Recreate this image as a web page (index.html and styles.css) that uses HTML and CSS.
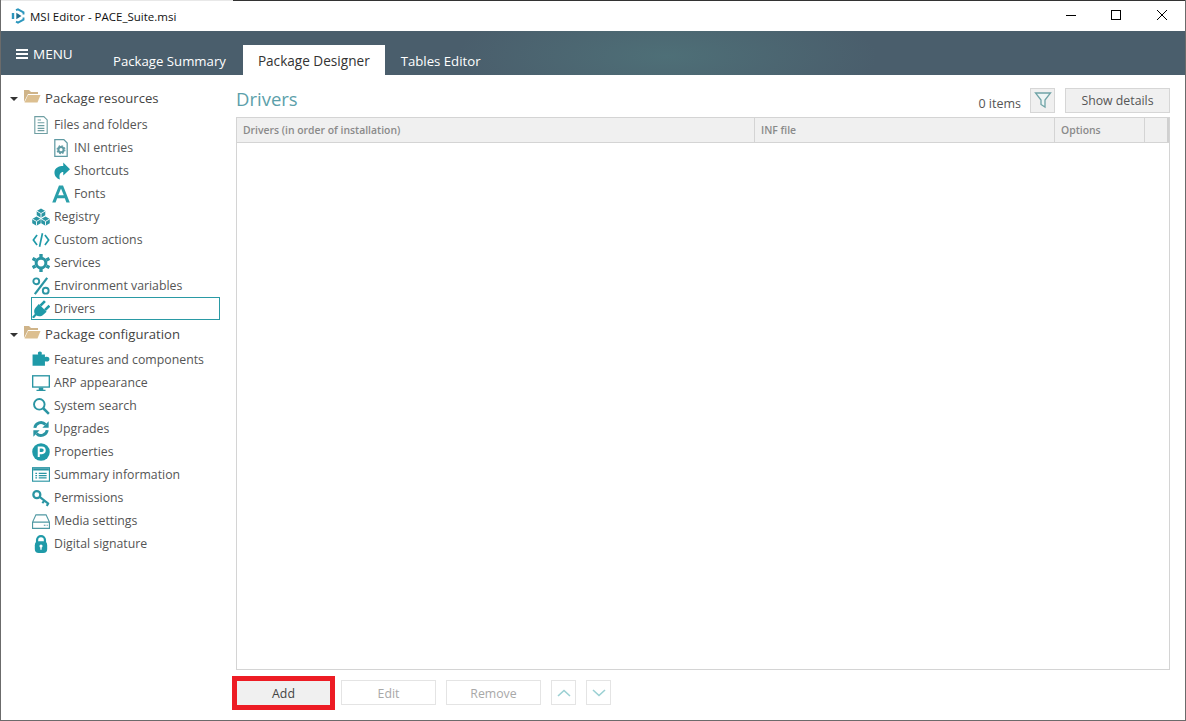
FILE: index.html
```html
<!doctype html>
<html lang="en">
<head>
    <meta charset="UTF-8">
    <title>MSI Editor - PACE_Suite.msi</title>
    <link rel="stylesheet" href="styles.css">
</head>
<body>
    <div class="window">
        <div class="top-edge"></div>
        <div class="titlebar">
            <svg class="app-icon" width="16" height="16" viewBox="0 0 16 16">
                <path d="M6 2.200 8 1.300l5.500 3v2.200M13.500 9.500v2.200L8 14.700l-2-1" fill="none" stroke="#2b96bd" stroke-width="1.900"/>
                <path d="M3 11V5" fill="none" stroke="#2b96bd" stroke-width="2.400"/>
                <path d="M6.300 4.800 11.500 8l-5.200 3.200z" fill="#1f6f8f"/>
            </svg>
            <span class="app-title">MSI Editor - PACE_Suite.msi</span>
            <div class="win-buttons">
                <svg width="12" height="12" viewBox="0 0 12 12"><path d="M1 6.500h10" stroke="#000" fill="none"/></svg>
                <svg width="12" height="12" viewBox="0 0 12 12"><rect x="1.500" y="1.500" width="9" height="9" stroke="#000" fill="none"/></svg>
                <svg width="12" height="12" viewBox="0 0 12 12"><path d="M1 1l10 10M11 1 1 11" stroke="#000" fill="none"/></svg>
            </div>
        </div>

        <div class="menubar">
            <div class="menu-btn">
                <svg width="12" height="10" viewBox="0 0 12 10"><path d="M0 1h12M0 5h12M0 9h12" stroke="#fff" stroke-width="2" fill="none"/></svg>
                MENU
            </div>
            <div class="tabs">
                <div class="tab">Package Summary</div>
                <div class="tab active">Package Designer</div>
                <div class="tab">Tables Editor</div>
            </div>
        </div>

        <div class="main">
            <div class="sidebar">
                <div class="group">
                    <div class="tree-row root">
                        <span class="caret"></span>
                        <svg class="folder" width="18" height="14" viewBox="0 0 18 14"><path d="M1 13V1h5l2 2h7v2H5l-4 8z" fill="#cfb489"/><path d="M1.500 13.500 5 6h12.500l-3 7.500z" fill="#dcbf90"/></svg>
                        <span>Package resources</span>
                    </div>
                    <div class="tree-row">
                        <svg class="icon" viewBox="0 0 16 16"><path d="M2.500.5h8l3 3v12h-11z" fill="#fff" stroke="#6f9fa3"/><path d="M5 3.500h3M5 6h6M5 8.500h6M5 11h6M5 13h6" stroke="#6f9fa3" fill="none"/></svg>
                        <span>Files and folders</span>
                    </div>
                    <div class="tree-row sub">
                        <svg class="icon" viewBox="0 0 16 16"><path d="M2.500.5h8l3 3v12h-11z" fill="#fff" stroke="#5f9aa3" stroke-width="1.100"/><circle cx="8" cy="9.500" r="2.300" fill="none" stroke="#5f9aa3" stroke-width="1.800"/><circle cx="8" cy="9.500" r="3.500" fill="none" stroke="#5f9aa3" stroke-width="1" stroke-dasharray="1.500 1.250"/></svg>
                        <span>INI entries</span>
                    </div>
                    <div class="tree-row sub">
                        <svg class="icon" viewBox="0 0 16 16"><path d="M10 .5l6 6-6 5.500V8.800C7.500 8.800 6 10.500 7 15.500 4 14.500 2 12 2.200 8.800 2.600 5.200 6 3.500 10 3.500z" fill="#1f9aa8"/></svg>
                        <span>Shortcuts</span>
                    </div>
                    <div class="tree-row sub">
                        <svg class="icon" viewBox="0 0 16 16"><path d="M6.200.5h3.600L15.800 15.500h-3l-1.400-3.800H4.600L3.200 15.500h-3zM5.500 9.200h5L8 3z" fill="#2a9faa"/></svg>
                        <span>Fonts</span>
                    </div>
                    <div class="tree-row">
                        <svg class="icon" viewBox="0 0 16 16"><path d="M8 .5l3.800 2.200v3.800L8 8.700 4.200 6.500V2.700z" fill="#2a95a3"/><path d="M4 7.500l3.800 2.200v3.800L4 15.700.2 13.500V9.700z" fill="#2a95a3"/><path d="M12 7.500l3.800 2.200v3.800L12 15.700l-3.800-2.200V9.700z" fill="#2a95a3"/><path d="M4.200 2.700 8 4.900l3.800-2.200M8 4.900v3.800M.2 9.700 4 11.900l3.800-2.200M4 11.900v3.800M8.200 9.700l3.800 2.200 3.800-2.200M12 11.900v3.800" stroke="#fff" stroke-width=".8" fill="none"/></svg>
                        <span>Registry</span>
                    </div>
                    <div class="tree-row">
                        <svg class="icon" viewBox="0 0 16 16"><path d="M4.500 3.500 1.200 8l3.300 4.500M11.500 3.500 14.800 8l-3.300 4.500M9.300 2 6.700 14" stroke="#1f9aa8" stroke-width="1.500" fill="none"/></svg>
                        <span>Custom actions</span>
                    </div>
                    <div class="tree-row">
                        <svg class="icon" viewBox="0 0 16 16"><circle cx="8" cy="8" r="4.300" fill="none" stroke="#2a95a3" stroke-width="2.600"/><path d="M8 0v3M8 13v3M.5 4l2.700 1.400M12.800 10.600l2.700 1.400M15.500 4l-2.700 1.400M3.200 10.600.5 12" stroke="#2a95a3" stroke-width="3" fill="none"/></svg>
                        <span>Services</span>
                    </div>
                    <div class="tree-row">
                        <svg class="icon" viewBox="0 0 16 16"><circle cx="3.800" cy="3.800" r="2.600" fill="none" stroke="#2a95a3" stroke-width="1.700"/><circle cx="12.200" cy="12.200" r="2.600" fill="none" stroke="#2a95a3" stroke-width="1.700"/><path d="M13.500 .8 2.500 15.200" stroke="#2a95a3" stroke-width="2" fill="none"/></svg>
                        <span>Environment variables</span>
                    </div>
                    <div class="tree-row selected">
                        <svg class="icon" viewBox="0 0 16 16"><path d="M0 15 2.500 12.500C1.500 10.500 1.800 8.300 3.500 6.500L6 3.500 13 10.500 10 13C8.300 14.700 6 15 3.800 13.800L1.500 16.500z" fill="#1f9aa8"/><path d="M7.500 5 11.500 1M11.500 9 15.500 5" stroke="#1f9aa8" stroke-width="2.400" fill="none"/></svg>
                        <span>Drivers</span>
                    </div>
                </div>

                <div class="group">
                    <div class="tree-row root">
                        <span class="caret"></span>
                        <svg class="folder" width="18" height="14" viewBox="0 0 18 14"><path d="M1 13V1h5l2 2h7v2H5l-4 8z" fill="#cfb489"/><path d="M1.500 13.500 5 6h12.500l-3 7.500z" fill="#dcbf90"/></svg>
                        <span>Package configuration</span>
                    </div>
                    <div class="tree-row first">
                        <svg class="icon" viewBox="0 0 16 16"><path d="M.5 3H5.500C4.800 1.500 5.500.5 7 .5S9.200 1.500 8.500 3H11.500V5.500C13 4.800 15.500 5 15.500 7.300S13 9.800 11.500 9V13H.5z" fill="#1f9aa8"/></svg>
                        <span>Features and components</span>
                    </div>
                    <div class="tree-row">
                        <svg class="icon" viewBox="0 0 16 16"><rect x=".6" y="1.600" width="14.800" height="10" fill="none" stroke="#2a95a3" stroke-width="1.200"/><path d="M6 12h4v2H6zM4 14h8v1.200H4z" fill="#2a95a3"/></svg>
                        <span>ARP appearance</span>
                    </div>
                    <div class="tree-row">
                        <svg class="icon" viewBox="0 0 16 16"><circle cx="6.500" cy="6.500" r="4.700" fill="none" stroke="#2a95a3" stroke-width="1.700"/><path d="M10 10l5 5" stroke="#2a95a3" stroke-width="2.200" fill="none"/></svg>
                        <span>System search</span>
                    </div>
                    <div class="tree-row">
                        <svg class="icon" viewBox="0 0 16 16"><path d="M2.500 7A5.500 5.500 0 0 1 12 4" fill="none" stroke="#2a95a3" stroke-width="2.600"/><path d="M13.500 9A5.500 5.500 0 0 1 4 12" fill="none" stroke="#2a95a3" stroke-width="2.600"/><path d="M14.800 1.200v5.600H9.200zM1.200 14.800V9.200h5.600z" fill="#2a95a3"/></svg>
                        <span>Upgrades</span>
                    </div>
                    <div class="tree-row">
                        <svg class="icon" viewBox="0 0 16 16"><circle cx="8" cy="8" r="7.800" fill="#1f9aa8"/><path d="M6 12.500V4h2.800a2.500 2.500 0 0 1 0 5H6" fill="none" stroke="#fff" stroke-width="1.800"/></svg>
                        <span>Properties</span>
                    </div>
                    <div class="tree-row">
                        <svg class="icon" viewBox="0 0 16 16"><rect x=".5" y="1.500" width="15" height="12" fill="none" stroke="#2a95a3"/><path d="M1 2h14v2H1z" fill="#2a95a3"/><path d="M3 6.500h1.500M6 6.500h7M3 8.500h1.500M6 8.500h7M3 10.500h1.500M6 10.500h7" stroke="#2a95a3" fill="none"/></svg>
                        <span>Summary information</span>
                    </div>
                    <div class="tree-row">
                        <svg class="icon" viewBox="0 0 16 16"><circle cx="4.300" cy="5" r="3.100" fill="none" stroke="#2a95a3" stroke-width="2"/><path d="M6.800 7l8.200 6.500M11 10.300l-1.800 2.200M14.500 13l-1.500 2" stroke="#2a95a3" stroke-width="1.900" fill="none"/></svg>
                        <span>Permissions</span>
                    </div>
                    <div class="tree-row">
                        <svg class="icon" viewBox="0 0 16 16"><path d="M.5 9 3.500 2.500h9l3 6.500v5.500H.5zM.5 9h15" fill="none" stroke="#4f98a2"/><path d="M10.500 11.800h1.500M13 11.800h1" stroke="#4f98a2" fill="none"/></svg>
                        <span>Media settings</span>
                    </div>
                    <div class="tree-row">
                        <svg class="icon" viewBox="0 0 16 16"><path d="M4.500 7V4.500a3.500 3.500 0 0 1 7 0V7" fill="none" stroke="#1f9aa8" stroke-width="2"/><rect x="2.500" y="5.500" width="11" height="10.500" rx="3.500" fill="#1f9aa8"/><circle cx="8" cy="9.800" r="1.400" fill="#fff"/><path d="M8 10v3" stroke="#fff" stroke-width="1.200" fill="none"/></svg>
                        <span>Digital signature</span>
                    </div>
                </div>
            </div>

            <div class="content">
                <div class="content-head">
                    <h1>Drivers</h1>
                    <span class="count">0 items</span>
                    <button class="filter-btn">
                        <svg width="18" height="18" viewBox="0 0 18 18"><path d="M1.500 2h15L11 9v7l-4-2.500V9z" fill="#eef5f5" stroke="#6fa3a6" stroke-width="1.300"/></svg>
                    </button>
                    <button class="details-btn">Show details</button>
                </div>

                <div class="grid">
                    <div class="grid-head">
                        <div class="col col-name">Drivers (in order of installation)</div>
                        <div class="col col-inf">INF file</div>
                        <div class="col col-opt">Options</div>
                        <div class="col col-end"></div>
                    </div>
                </div>

                <div class="actions">
                    <button class="btn primary">Add</button>
                    <button class="btn" disabled>Edit</button>
                    <button class="btn" disabled>Remove</button>
                    <button class="btn-arrow" disabled>
                        <svg width="14" height="8" viewBox="0 0 14 8"><path d="M1 7l6-5.500L13 7" stroke="#9bd0d3" stroke-width="1.600" fill="none"/></svg>
                    </button>
                    <button class="btn-arrow" disabled>
                        <svg width="14" height="8" viewBox="0 0 14 8"><path d="M1 1l6 5.500L13 1" stroke="#9bd0d3" stroke-width="1.600" fill="none"/></svg>
                    </button>
                </div>
            </div>
        </div>
    </div>
</body>
</html>
```

FILE: styles.css
```css
* {
    box-sizing: border-box;
}
html, body {
    margin: 0;
    padding: 0;
    height: 100%;
}
body {
    font-family: "Open Sans", "Noto Sans", sans-serif;
    font-size: 12.300px;
    color: #555;
    background: #fff;
    overflow: hidden;
}
.window {
    height: 721px;
    border: 1px solid #6b6b6b;
    border-top: 0;
    display: flex;
    flex-direction: column;
}
.top-edge {
    height: 1px;
    flex: none;
    background: linear-gradient(to right, #e8e8e8 232px, #333 232px);
}
.titlebar {
    height: 30px;
    display: flex;
    align-items: center;
    padding-left: 9px;
    flex: none;
}
.app-icon {
    margin-right: 4px;
}
.app-title {
    color: #111;
    font-size: 11.500px;
}
.win-buttons {
    margin-left: auto;
    margin-top: -2px;
    display: flex;
    gap: 33px;
    padding-right: 17px;
}
.win-buttons svg:last-child {
    margin-left: 1px;
}
.menubar {
    height: 44px;
    flex: none;
    display: flex;
    align-items: flex-end;
    background: radial-gradient(ellipse 210px 60px at 666px 25px, #4e6f77, #4a5e6c);
    color: #fff;
}
.menu-btn {
    width: 96px;
    height: 44px;
    flex: none;
    display: flex;
    align-items: center;
    gap: 5px;
    padding-left: 15px;
    padding-top: 1px;
    font-size: 13.500px;
}
.tabs {
    display: flex;
    height: 30px;
}
.tab {
    padding: 0 17px 0 16px;
    line-height: 32px;
    font-size: 13.200px;
    color: #fff;
    white-space: nowrap;
}
.tab.active {
    padding: 0 15px;
    background: #fff;
    color: #333;
    font-size: 13.600px;
    font-weight: 500;
}
.main {
    flex: 1;
    display: flex;
    min-height: 0;
}
.sidebar {
    width: 235px;
    flex: none;
    padding-top: 11px;
}
.group {
    margin-bottom: 2px;
}
.tree-row {
    height: 23px;
    margin-left: 30px;
    width: 189px;
    display: flex;
    align-items: center;
    gap: 4px;
    padding-left: 0;
    white-space: nowrap;
    border: 1px solid transparent;
}
.tree-row.root {
    margin-left: 8px;
    margin-bottom: 4px;
    width: 211px;
    gap: 5px;
    font-size: 13.100px;
    color: #444;
}
.tree-row.first {
    margin-top: -1px;
}
.tree-row.sub {
    margin-left: 50px;
    width: 169px;
}
.tree-row.selected {
    border-color: #2a9aa5;
}
.icon {
    width: 18px;
    height: 18px;
    flex: none;
}
.caret {
    width: 0;
    height: 0;
    border-left: 4px solid transparent;
    border-right: 4px solid transparent;
    border-top: 4px solid #333;
    margin-top: 2px;
}
.folder {
    flex: none;
    margin-top: -3px;
    margin-right: -1px;
}
.content {
    flex: 1;
    min-width: 0;
    display: flex;
    flex-direction: column;
    padding-right: 15px;
}
.content-head {
    height: 42px;
    flex: none;
    display: flex;
    align-items: center;
    padding-top: 8px;
}
.content-head h1 {
    margin: -4px auto 0 0;
    font-size: 18.500px;
    font-weight: 400;
    color: #5c9faa;
}
.count {
    font-size: 12.500px;
    margin-right: 9px;
    margin-top: 6px;
}
.filter-btn {
    width: 25px;
    height: 25px;
    padding: 0;
    margin-right: 10px;
    border: 1px solid #d6d6d6;
    background: #f0f0f0;
    display: flex;
    align-items: center;
    justify-content: center;
}
.details-btn {
    width: 105px;
    height: 25px;
    padding: 0;
    border: 1px solid #d6d6d6;
    background: #f0f0f0;
    color: #555;
    font: inherit;
}
.grid {
    flex: 1;
    border: 1px solid #d4d4d4;
    min-height: 0;
}
.grid-head {
    height: 25px;
    display: flex;
    background: #f0f0f0;
    border-bottom: 1px solid #d4d4d4;
    font-size: 10.400px;
    font-weight: 600;
    color: #8a8a8a;
}
.col {
    line-height: 24px;
    padding-left: 6px;
    border-right: 1px solid #d4d4d4;
    white-space: nowrap;
}
.col-name {
    width: 518px;
}
.col-inf {
    width: 300px;
}
.col-opt {
    width: 90px;
}
.col-end {
    flex: 1;
    border-right: 2px solid #d0d0d0;
}
.actions {
    height: 50px;
    flex: none;
    display: flex;
    align-items: flex-start;
    gap: 10px;
    padding-top: 10px;
}
.btn {
    width: 95px;
    height: 25px;
    padding: 1px 0 0;
    border: 1px solid #e4e4e4;
    background: #fff;
    color: #a8a8a8;
    font: inherit;
}
.btn.primary {
    height: 26px;
    background: #f0f0f0;
    border-color: #e0e0e0;
    border-bottom-color: #c8c8c8;
    color: #444;
    outline: 5px solid #ed1c24;
    outline-offset: -1px;
}
.btn-arrow {
    width: 25px;
    height: 25px;
    padding: 0;
    border: 1px solid #e4e4e4;
    background: #fff;
    display: flex;
    align-items: center;
    justify-content: center;
}
```
